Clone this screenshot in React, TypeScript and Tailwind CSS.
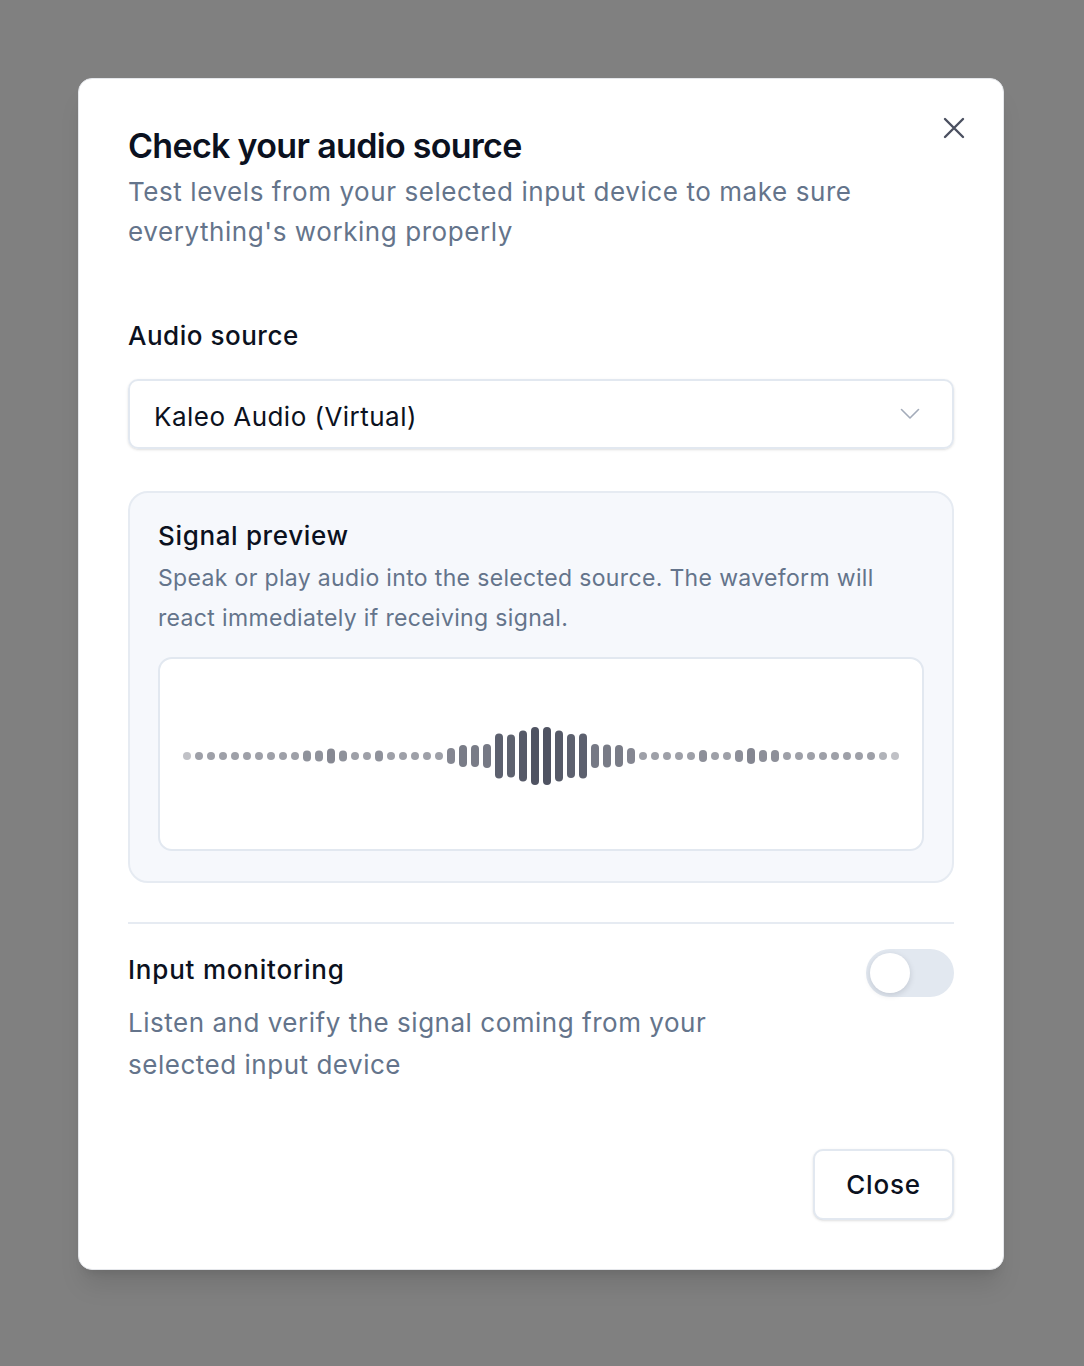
import React from "react";

const HEIGHTS: number[] = [
  8, 8, 8, 8, 8, 8, 8, 8, 8, 8,
  11, 11, 15, 11, 8, 8, 11, 8, 8, 8,
  8, 8, 16, 22, 22, 24, 45, 43, 51, 58,
  58, 51, 44, 45, 24, 23, 22, 16, 8, 8,
  8, 8, 8, 12, 8, 8, 12, 16, 12, 12,
  8, 8, 8, 8, 8, 8, 8, 8, 8, 8,
];

function mix(a: number[], b: number[], t: number) {
  const c = a.map((v, i) => Math.round(v + (b[i] - v) * t));
  return `rgb(${c[0]},${c[1]},${c[2]})`;
}

function Waveform() {
  const light = [158, 160, 168];
  const dark = [79, 83, 98];
  const n = HEIGHTS.length;
  return (
    <svg width={716} height={64} viewBox="0 0 716 64" aria-hidden="true" className="mt-[4px]">
      {HEIGHTS.map((h, k) => {
        const t = Math.min(1, Math.max(0, (h - 8) / 50));
        const tt = Math.pow(t, 0.6);
        let opacity = 1;
        if (k === 0 || k === n - 1) opacity = 0.65;
        else if (k === n - 2) opacity = 0.8;
        return (
          <rect
            key={k}
            x={12 * k}
            y={32 - h / 2}
            width={8}
            height={h}
            rx={4}
            fill={mix(light, dark, tt)}
            opacity={opacity}
          />
        );
      })}
    </svg>
  );
}

export default function App() {
  return (
    <div
      className="w-[1084px] h-[1366px] bg-[#808080] pt-[78px] pl-[78px]"
      style={{ fontFamily: "Inter, 'Noto Sans', sans-serif" }}
    >
      <div className="relative w-[926px] h-[1192px] bg-white rounded-[14px] border border-[#e5e7eb] shadow-xl px-[49px] pt-[47px] pb-[49px] flex flex-col">
        <button className="absolute right-[38px] top-[38px]" aria-label="Close">
          <svg width="22" height="22" viewBox="0 0 22 22" fill="none">
            <path d="M2 2L20 20M20 2L2 20" stroke="#4b5060" strokeWidth="2.4" strokeLinecap="round" />
          </svg>
        </button>

        <h1 className="text-[34px] leading-[40px] font-semibold tracking-[-0.02em] text-[#0b1120]">
          Check your audio source
        </h1>
        <p className="mt-[6px] text-[26px] leading-[40px] text-[#64748b] tracking-[0.022em] max-w-[760px]">
          Test levels from your selected input device to make sure everything's working properly
        </p>

        <div className="mt-[66px] text-[26px] leading-[36px] font-medium text-[#0b1120] tracking-[0.02em]">
          Audio source
        </div>

        <div className="mt-[25px] h-[70px] rounded-[10px] border-2 border-[#e2e8f0] shadow-sm flex items-center justify-between pl-[24px] pr-[32px]">
          <span className="mt-[5px] text-[26px] text-[#0b1120] tracking-[0.018em]">Kaleo Audio (Virtual)</span>
          <svg width="20" height="12" viewBox="0 0 20 12" fill="none">
            <path d="M1.5 1.5L10 10L18.5 1.5" stroke="#a3abb9" strokeWidth="1.6" strokeLinecap="round" strokeLinejoin="round" />
          </svg>
        </div>

        <div className="mt-[42px] rounded-[20px] border-2 border-[#e6ebf2] bg-[#f6f8fc] px-[28px] pt-[25px] pb-[30px]">
          <div className="text-[26px] leading-[36px] font-medium text-[#0b1120] tracking-[0.025em]">Signal preview</div>
          <p className="mt-[4px] text-[23px] leading-[40px] text-[#64748b] tracking-[0.015em]">
            Speak or play audio into the selected source. The waveform will react immediately if receiving signal.
          </p>
          <div className="mt-[19px] h-[194px] rounded-[14px] border-2 border-[#e2e8f0] bg-white flex items-center justify-center">
            <Waveform />
          </div>
        </div>

        <div className="mt-[39px] h-[2px] bg-[#e6ebf2]" />

        <div className="mt-[28px] flex justify-between items-start">
          <div>
            <div className="text-[26px] leading-[36px] font-medium text-[#0b1120] tracking-[0.03em]">
              Input monitoring
            </div>
            <p className="mt-[14px] text-[26px] leading-[42px] text-[#64748b] tracking-[0.02em] max-w-[620px]">
              Listen and verify the signal coming from your selected input device
            </p>
          </div>
          <div className="mt-[-3px] w-[88px] h-[48px] rounded-full bg-[#e2e8f0] p-[4px] flex items-center">
            <div className="w-[40px] h-[40px] rounded-full bg-white shadow-[0_2px_6px_rgba(15,23,42,0.15)]" />
          </div>
        </div>

        <div className="mt-auto flex justify-end">
          <button className="w-[141px] h-[71px] rounded-[10px] border-2 border-[#e2e8f0] bg-white shadow-sm text-[26px] font-medium text-[#0b1120] tracking-[0.03em]">
            Close
          </button>
        </div>
      </div>
    </div>
  );
}
